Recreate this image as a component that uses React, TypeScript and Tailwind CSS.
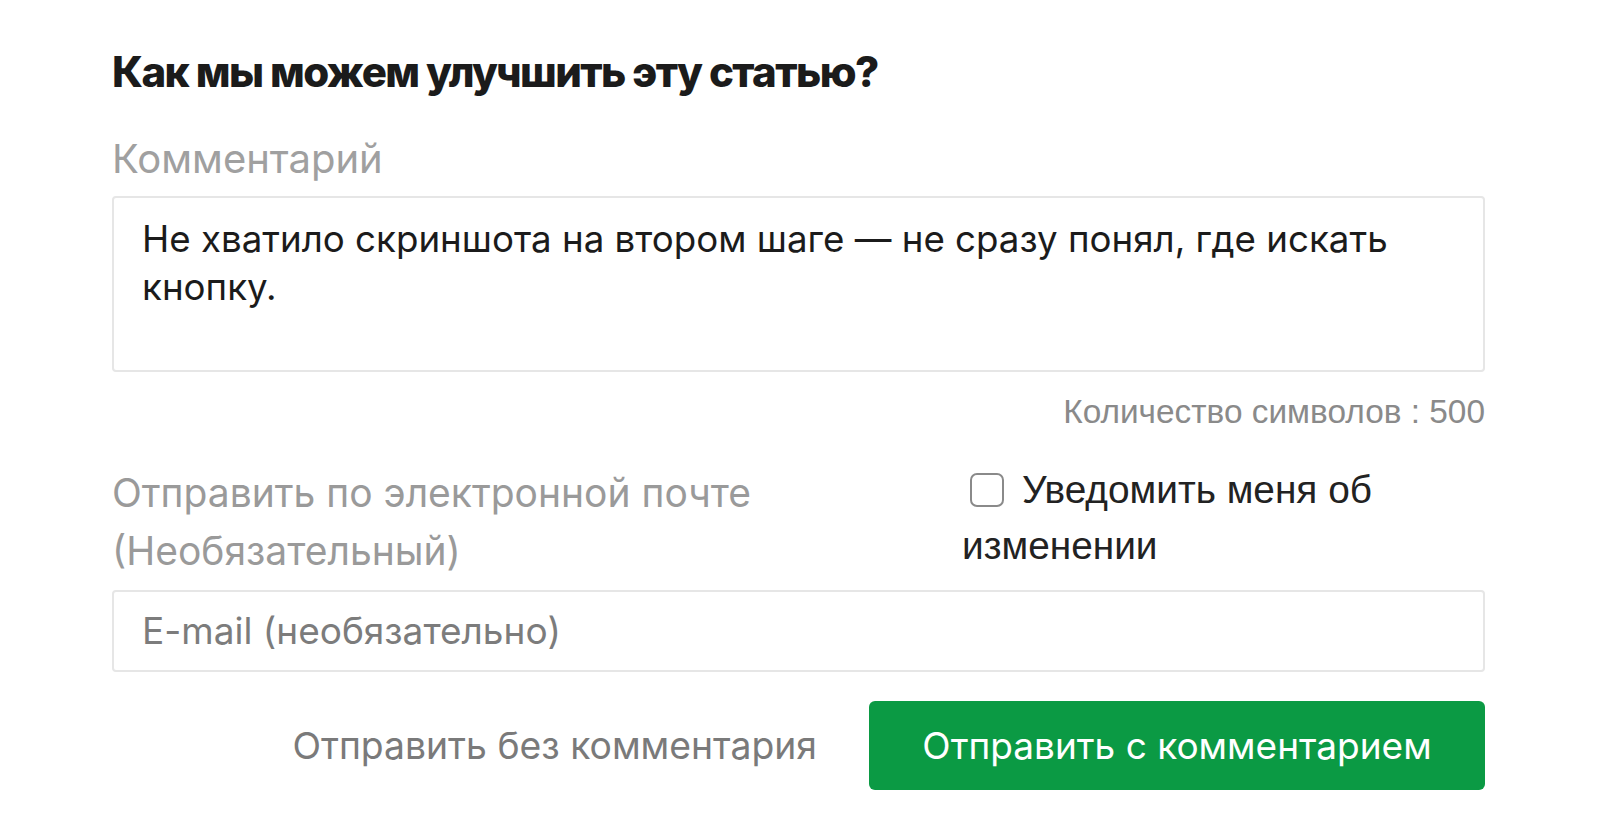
import React from "react";

export default function App() {
  return (
    <div className="w-[1600px] h-[840px] bg-white overflow-hidden" style={{ fontFamily: "Inter, 'Noto Sans', sans-serif" }}>
      <div className="ml-[112px] w-[1373px] pt-[47px] flex flex-col">
        <h2 className="text-[42px] leading-[50px] font-extrabold text-[#1b1b1b] tracking-[-1.6px]">
          Как мы можем улучшить эту статью?
        </h2>
        <label className="mt-[38px] text-[40px] leading-[48px] text-[#a0a0a0]">Комментарий</label>
        <div className="mt-[13px] h-[176px] border-2 border-[#e6e6e6] rounded-[4px] px-[28px] pt-[17px] text-[36.7px] leading-[48px] text-[#1b1b1b]">
          Не хватило скриншота на втором шаге — не сразу понял, где искать
          <br />
          кнопку.
        </div>
        <div className="mt-[20px] text-right text-[33.4px] leading-[40px] text-[#8a8a8a]" style={{ fontFamily: "'Liberation Sans', Arial, sans-serif" }}>
          Количество символов : 500
        </div>
        <div className="mt-[30px] flex items-start">
          <div className="w-[850px] pt-[2px] text-[39px] leading-[58px] text-[#9a9a9a]">
            <span className="block">Отправить по электронной почте</span>
            <span className="block">(Необязательный)</span>
          </div>
          <div className="flex-1 text-[38.8px] leading-[56px] text-[#222]" style={{ fontFamily: "'Liberation Sans', Arial, sans-serif" }}>
            <div className="flex items-center">
              <span className="ml-[8px] w-[34px] h-[34px] border-2 border-[#8a8a8a] rounded-[7px] bg-white" />
              <span className="ml-[18px]">Уведомить меня об</span>
            </div>
            <div>изменении</div>
          </div>
        </div>
        <div className="mt-[10px] h-[82px] border-2 border-[#e6e6e6] rounded-[4px] px-[28px] flex items-center text-[37px] text-[#7c7c7c]">
          E-mail (необязательно)
        </div>
        <div className="mt-[29px] flex justify-end items-center">
          <span className="text-[37.3px] text-[#7a7a7a]">Отправить без комментария</span>
          <button className="ml-[52px] w-[616px] h-[89px] rounded-[6px] bg-[#0b9a44] text-white text-[37px]">
            Отправить с комментарием
          </button>
        </div>
      </div>
    </div>
  );
}
